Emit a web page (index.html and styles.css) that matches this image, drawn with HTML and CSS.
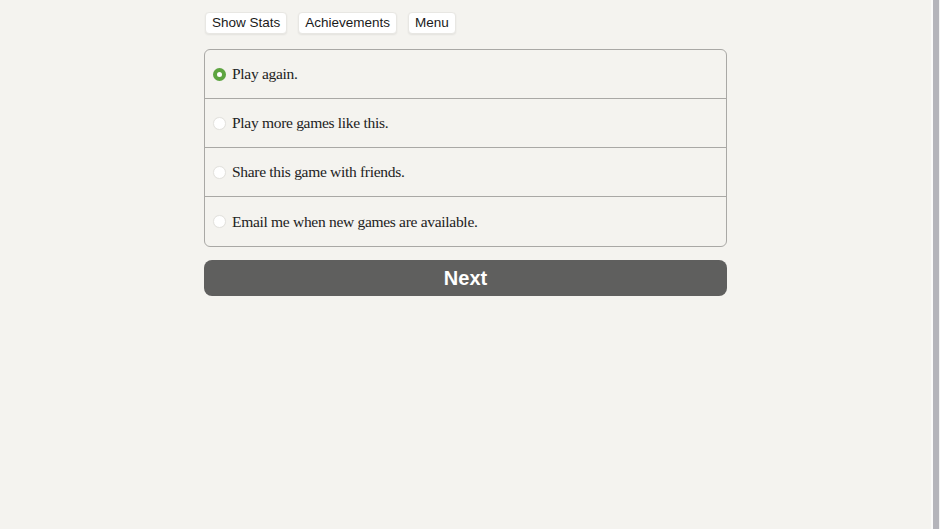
FILE: index.html
```html
<!DOCTYPE html>
<html lang="en">
<head>
<meta charset="utf-8">
<title>Game Over</title>
<link rel="stylesheet" href="styles.css">
</head>
<body>
<main class="page">
  <div class="wrap">
    <div class="toolbar">
      <button class="tool-btn">Show Stats</button>
      <button class="tool-btn">Achievements</button>
      <button class="tool-btn">Menu</button>
    </div>
    <div class="choices">
      <label class="choice"><span class="radio checked"></span><span class="choice-text">Play again.</span></label>
      <label class="choice"><span class="radio"></span><span class="choice-text">Play more games like this.</span></label>
      <label class="choice"><span class="radio"></span><span class="choice-text">Share this game with friends.</span></label>
      <label class="choice"><span class="radio"></span><span class="choice-text">Email me when new games are available.</span></label>
    </div>
    <button class="next-btn">Next</button>
  </div>
</main>
<aside class="scrollbar"></aside>
</body>
</html>
```
FILE: styles.css
```css
html, body {
  margin: 0;
  padding: 0;
  background: #f4f3ef;
}
body {
  font-family: "Liberation Sans", Arial, sans-serif;
  color: #222;
  display: flex;
  height: 100vh;
  overflow: hidden;
}
.page {
  flex: 1;
  min-width: 0;
}
.wrap {
  width: 523px;
  margin: 0 auto;
  padding-top: 12px;
}
.toolbar {
  display: flex;
  gap: 11px;
  padding-left: 1px;
}
.tool-btn {
  font-family: "Liberation Sans", Arial, sans-serif;
  font-size: 13.5px;
  color: #1a1a1a;
  height: 22px;
  padding: 0 6px;
  background: #ffffff;
  border: 1px solid #e8e7e3;
  border-radius: 4px;
  box-shadow: 0 1px 2px rgba(0,0,0,0.07);
  line-height: 20px;
}
.choices {
  margin-top: 15px;
  border: 1px solid #a9a8a5;
  border-radius: 6px;
  display: flex;
  flex-direction: column;
}
.choice {
  height: 48px;
  display: flex;
  align-items: center;
  padding-left: 8px;
  gap: 6px;
  border-top: 1px solid #a9a8a5;
}
.choice:first-child {
  border-top: none;
}
.choice:last-child {
  height: 49px;
}
.radio {
  width: 13px;
  height: 13px;
  border-radius: 50%;
  background: #fff;
  box-sizing: border-box;
  border: 1px solid #e4e3df;
  box-shadow: 0 0 1px rgba(0,0,0,0.06);
  flex: none;
}
.radio.checked {
  background: #fff;
  border: 4px solid #5da540;
}
.choice-text {
  font-family: "Liberation Serif", "Times New Roman", serif;
  font-size: 15.5px;
  letter-spacing: -0.3px;
  color: #222;
}
.next-btn {
  display: block;
  width: 100%;
  margin-top: 13px;
  height: 36px;
  border: none;
  border-radius: 8px;
  background: #5f5f5e;
  color: #ffffff;
  font-family: "Liberation Sans", Arial, sans-serif;
  font-weight: bold;
  font-size: 20px;
}
.scrollbar {
  flex: 0 0 9px;
  width: 9px;
  align-self: stretch;
  box-sizing: border-box;
  background-color: #b4b4ba;
  border-left: 2px solid #fafaf9;
  border-right: 1px solid #f3f3f3;
}
```
